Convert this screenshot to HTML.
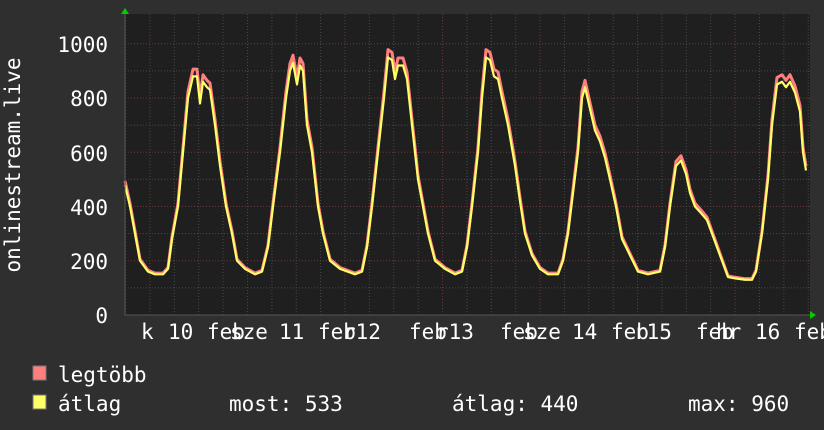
<!DOCTYPE html>
<html><head><meta charset="utf-8"><style>
html,body{margin:0;padding:0;background:#2f2f2f;}
body{width:824px;height:430px;overflow:hidden;position:relative;font-family:"DejaVu Sans Mono","Liberation Mono",monospace;}
svg{position:absolute;left:0;top:0;}
text{fill:#fff;font-family:"DejaVu Sans Mono","Liberation Mono",monospace;font-size:21px;}
</style></head><body>
<svg id="s" width="824" height="430" xmlns="http://www.w3.org/2000/svg">
<rect x="125" y="14" width="685" height="301" fill="#1f1f1f"/>
<g id="grid"></g>
<polyline id="red" fill="none" stroke="#ff7f7f" stroke-width="3" stroke-linejoin="round"/>
<polyline id="yel" fill="none" stroke="#ffff66" stroke-width="2.2" stroke-linejoin="round"/>
<line x1="125" y1="14" x2="125" y2="315" stroke="#555"/>
<line x1="125" y1="315" x2="810" y2="315" stroke="#555"/>
<polygon points="121,14 129,14 125,8" fill="#0c0"/>
<polygon points="810,311 810,319 816,315" fill="#0c0"/>
<text x="108" y="52" text-anchor="end">1000</text>
<text x="108" y="106" text-anchor="end">800</text>
<text x="108" y="161" text-anchor="end">600</text>
<text x="108" y="215" text-anchor="end">400</text>
<text x="108" y="269" text-anchor="end">200</text>
<text x="108" y="323" text-anchor="end">0</text>
<text transform="translate(20,165) rotate(-90)" text-anchor="middle">onlinestream.live</text>
<g>
<text x="141" y="339">k</text>
<text x="168" y="339">10</text>
<text x="207" y="339">feb</text>
<text x="230" y="339">sze</text>
<text x="279" y="339">11</text>
<text x="318" y="339">feb</text>
<text x="343" y="339">r12</text>
<text x="409" y="339">feb</text>
<text x="436" y="339">r13</text>
<text x="500" y="339">feb</text>
<text x="523" y="339">sze</text>
<text x="572" y="339">14</text>
<text x="611" y="339">feb</text>
<text x="634" y="339">r15</text>
<text x="696" y="339">feb</text>
<text x="716" y="339">hr</text>
<text x="755" y="339">16</text>
<text x="794" y="339">feb</text>
</g>
<rect x="33" y="366" width="13" height="14" fill="#ff7f7f" stroke="#777"/>
<rect x="33" y="395" width="13" height="14" fill="#ffff66" stroke="#777"/>
<text x="58" y="382">legtöbb</text>
<text x="58" y="411">átlag</text>
<text x="229" y="411">most: 533</text>
<text x="452" y="411">átlag: 440</text>
<text x="688" y="411">max: 960</text>
</svg>
<script>
var g=document.getElementById('grid'),h='';
for(var v=100;v<=1000;v+=100){var y=315-v*0.2712;var maj=v%200==0;h+='<line x1="125" x2="810" y1="'+y+'" y2="'+y+'" stroke="'+(maj?'#6a3a3a':'#4a4a4a')+'" stroke-dasharray="1,2"/>';}
for(var x=125.6;x<810;x+=24.38){var d=Math.abs(((x-150)/97.5)-Math.round((x-150)/97.5))<0.05;h+='<line y1="14" y2="315" x1="'+x+'" x2="'+x+'" stroke="'+(d?'#6a3a3a':'#4a4a4a')+'" stroke-dasharray="1,2"/>';}
g.innerHTML=h;
var k=[125,480,130,400,135,300,140,200,148,160,155,150,163,150,168,170,172,280,178,400,183,600,188,800,193,880,197,880,200,780,203,860,207,840,210,830,215,700,220,550,226,400,232,300,237,200,245,170,255,150,262,160,268,250,273,400,280,600,286,800,290,900,293,930,297,850,300,920,303,900,307,700,312,600,318,400,323,300,330,200,340,170,355,150,362,160,367,250,372,400,378,600,384,800,388,950,392,940,395,870,398,920,403,920,407,870,412,700,418,500,423,400,428,300,435,200,445,170,455,150,462,160,467,250,472,400,478,600,482,800,486,950,490,940,494,880,498,870,502,800,508,700,515,550,520,420,525,300,532,220,540,170,548,150,558,150,563,200,568,300,573,450,578,600,582,800,585,840,590,760,595,680,600,640,605,580,610,500,616,400,622,280,630,220,638,160,648,150,660,160,665,250,670,400,676,550,681,570,686,520,690,450,695,400,700,380,707,350,712,300,717,250,722,200,728,140,735,135,745,130,752,130,756,160,762,300,768,500,772,700,777,850,782,860,786,840,790,860,795,820,800,750,803,600,806,533];
var a='',b='';
for(var i=0;i<k.length;i+=2){var x=k[i],v=k[i+1];a+=x+','+(315-v*0.2712)+' ';b+=x+','+(315-v*1.03*0.2712)+' ';}
document.getElementById('yel').setAttribute('points',a);
document.getElementById('red').setAttribute('points',b);
</script>
</body></html>
